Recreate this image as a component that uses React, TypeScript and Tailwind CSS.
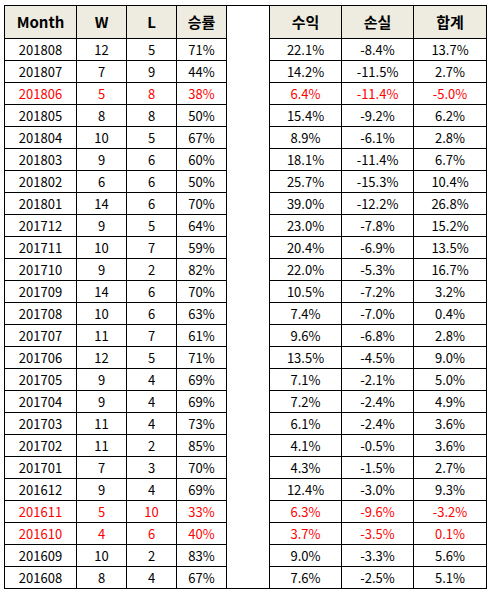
import React from "react";

type Row = [string, number, number, string, string, string, string, boolean?];

const rows: Row[] = [
  ["201808", 12, 5, "71%", "22.1%", "-8.4%", "13.7%"],
  ["201807", 7, 9, "44%", "14.2%", "-11.5%", "2.7%"],
  ["201806", 5, 8, "38%", "6.4%", "-11.4%", "-5.0%", true],
  ["201805", 8, 8, "50%", "15.4%", "-9.2%", "6.2%"],
  ["201804", 10, 5, "67%", "8.9%", "-6.1%", "2.8%"],
  ["201803", 9, 6, "60%", "18.1%", "-11.4%", "6.7%"],
  ["201802", 6, 6, "50%", "25.7%", "-15.3%", "10.4%"],
  ["201801", 14, 6, "70%", "39.0%", "-12.2%", "26.8%"],
  ["201712", 9, 5, "64%", "23.0%", "-7.8%", "15.2%"],
  ["201711", 10, 7, "59%", "20.4%", "-6.9%", "13.5%"],
  ["201710", 9, 2, "82%", "22.0%", "-5.3%", "16.7%"],
  ["201709", 14, 6, "70%", "10.5%", "-7.2%", "3.2%"],
  ["201708", 10, 6, "63%", "7.4%", "-7.0%", "0.4%"],
  ["201707", 11, 7, "61%", "9.6%", "-6.8%", "2.8%"],
  ["201706", 12, 5, "71%", "13.5%", "-4.5%", "9.0%"],
  ["201705", 9, 4, "69%", "7.1%", "-2.1%", "5.0%"],
  ["201704", 9, 4, "69%", "7.2%", "-2.4%", "4.9%"],
  ["201703", 11, 4, "73%", "6.1%", "-2.4%", "3.6%"],
  ["201702", 11, 2, "85%", "4.1%", "-0.5%", "3.6%"],
  ["201701", 7, 3, "70%", "4.3%", "-1.5%", "2.7%"],
  ["201612", 9, 4, "69%", "12.4%", "-3.0%", "9.3%"],
  ["201611", 5, 10, "33%", "6.3%", "-9.6%", "-3.2%", true],
  ["201610", 4, 6, "40%", "3.7%", "-3.5%", "0.1%", true],
  ["201609", 10, 2, "83%", "9.0%", "-3.3%", "5.6%"],
  ["201608", 8, 4, "67%", "7.6%", "-2.5%", "5.1%"],
];

const th = "border border-black bg-[#eeece1] font-bold text-[15px] text-center p-0";
const td = "border border-black text-center p-0";

const Head = ({ children }: { children: React.ReactNode }) => (
  <td className={th}>
    <div className="h-[32px] leading-[32px] overflow-hidden">{children}</div>
  </td>
);

const Cell = ({ children }: { children: React.ReactNode }) => (
  <td className={td}>
    <div className="h-[21px] leading-[21px] overflow-hidden">{children}</div>
  </td>
);

export default function App() {
  return (
    <div className="bg-white w-[491px] h-[596px] pl-[4px] pt-[5px] font-['Noto_Sans_CJK_KR','Malgun_Gothic',sans-serif] text-[13px] text-black">
      <table className="border-collapse table-fixed w-[482px]">
        <colgroup>
          <col className="w-[72px]" />
          <col className="w-[50px]" />
          <col className="w-[50px]" />
          <col className="w-[50px]" />
          <col className="w-[43px]" />
          <col className="w-[72px]" />
          <col className="w-[72px]" />
          <col className="w-[73px]" />
        </colgroup>
        <tbody>
          <tr>
            <Head>Month</Head>
            <Head>W</Head>
            <Head>L</Head>
            <Head>승률</Head>
            <td rowSpan={rows.length + 1} className="border border-black bg-white p-0" />
            <Head>수익</Head>
            <Head>손실</Head>
            <Head>합계</Head>
          </tr>
          {rows.map((r) => {
            const color = r[7] ? "text-[#ff0000]" : "text-black";
            return (
              <tr key={r[0]} className={color}>
                <Cell>{r[0]}</Cell>
                <Cell>{r[1]}</Cell>
                <Cell>{r[2]}</Cell>
                <Cell>{r[3]}</Cell>
                <Cell>{r[4]}</Cell>
                <Cell>{r[5]}</Cell>
                <Cell>{r[6]}</Cell>
              </tr>
            );
          })}
        </tbody>
      </table>
    </div>
  );
}
